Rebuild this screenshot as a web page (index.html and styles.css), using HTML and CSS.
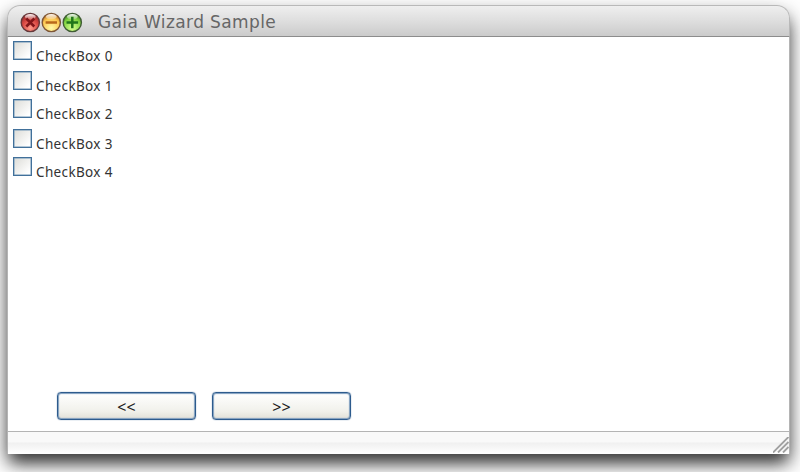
FILE: index.html
```html
<!DOCTYPE html>
<html lang="en">
<head>
<meta charset="utf-8">
<title>Gaia Wizard Sample</title>
<link rel="stylesheet" href="styles.css">
</head>
<body>
<main class="window">
  <header class="titlebar">
    <div class="controls">
      <svg class="orb" viewBox="0 0 21 21">
        <defs>
          <radialGradient id="red" cx=".5" cy=".8" r=".85"><stop offset="0" stop-color="#ff9c8c"/><stop offset=".5" stop-color="#dc4b45"/><stop offset="1" stop-color="#861c20"/></radialGradient>
          <radialGradient id="amber" cx=".5" cy=".8" r=".85"><stop offset="0" stop-color="#fffaa8"/><stop offset=".6" stop-color="#fdc850"/><stop offset="1" stop-color="#a95519"/></radialGradient>
          <radialGradient id="green" cx=".5" cy=".8" r=".85"><stop offset="0" stop-color="#d8ff90"/><stop offset=".6" stop-color="#80d440"/><stop offset="1" stop-color="#286b17"/></radialGradient>
          <linearGradient id="shine" x2="0" y2="1"><stop offset="0" stop-color="#fff" stop-opacity=".95"/><stop offset="1" stop-color="#fff" stop-opacity=".2"/></linearGradient>
        </defs>
        <circle cx="10.3" cy="10.5" r="9.1" fill="url(#red)" stroke="#65383a" stroke-width="1.4"/>
        <ellipse cx="10.3" cy="4.8" rx="5.4" ry="2.7" fill="url(#shine)"/>
        <path d="M6.3 6.5l8 8m0-8l-8 8" stroke="#821519" stroke-width="2.5"/>
      </svg>
      <svg class="orb" viewBox="0 0 21 21">
        <circle cx="10.3" cy="10.5" r="9.1" fill="url(#amber)" stroke="#7d5535" stroke-width="1.4"/>
        <ellipse cx="10.3" cy="4.8" rx="5.4" ry="2.7" fill="url(#shine)"/>
        <path d="M4.6 10.5h11.4" stroke="#b8691b" stroke-width="2.5"/>
      </svg>
      <svg class="orb" viewBox="0 0 21 21">
        <circle cx="10.3" cy="10.5" r="9.1" fill="url(#green)" stroke="#405c35" stroke-width="1.4"/>
        <ellipse cx="10.3" cy="4.8" rx="5.4" ry="2.7" fill="url(#shine)"/>
        <path d="M4.5 10.5h11.6M10.3 4.7v11.6" stroke="#20751a" stroke-width="2.5"/>
      </svg>
    </div>
    <h1 class="title">Gaia Wizard Sample</h1>
  </header>
  <section class="content">
    <div class="options">
      <label class="option"><input type="checkbox" class="box"><span>CheckBox 0</span></label>
      <label class="option"><input type="checkbox" class="box"><span>CheckBox 1</span></label>
      <label class="option"><input type="checkbox" class="box"><span>CheckBox 2</span></label>
      <label class="option"><input type="checkbox" class="box"><span>CheckBox 3</span></label>
      <label class="option"><input type="checkbox" class="box"><span>CheckBox 4</span></label>
    </div>
    <div class="buttons">
      <button class="nav">&lt;&lt;</button>
      <button class="nav">&gt;&gt;</button>
    </div>
  </section>
  <footer class="statusbar">
    <svg class="grip" viewBox="0 0 16 16"><path d="M0 15.5L15.5 0M5 15.5L15.5 5M10 15.5L15.5 10" stroke="#a0a0a0" stroke-width="1.9"/></svg>
  </footer>
</main>
</body>
</html>
```
FILE: styles.css
```css
* { box-sizing: border-box; }
body {
  margin: 0;
  height: 472px;
  padding: 5px 10px 18px 7px;
  overflow: hidden;
  background: #fff;
  font-family: "DejaVu Sans", Verdana, sans-serif;
}
.window {
  display: flex;
  flex-direction: column;
  height: 449px;
  border-radius: 13px 13px 0 0;
  background: #fff;
  box-shadow: 0 9px 20px rgba(0, 0, 0, .5), 0 11px 16px -4px rgba(0, 0, 0, .6);
}
.titlebar {
  display: flex;
  align-items: center;
  height: 32px;
  padding: 2px 0 0 12px;
  border: 1px solid #b9b9b9;
  border-bottom-color: #8c8c8c;
  border-radius: 13px 13px 0 0;
  background: linear-gradient(#efefef, #dedede 50%, #cbcbcb);
}
.controls { display: flex; width: 78px; }
.orb { display: block; width: 21px; height: 21px; }
.title {
  margin: 0;
  color: #666;
  font-size: 17px;
  font-weight: 400;
  letter-spacing: .38px;
  line-height: 22px;
}
.content {
  display: flex;
  flex: 1;
  flex-direction: column;
  justify-content: space-between;
  padding: 4px 5px 11px;
  border: solid #b4b4b4;
  border-width: 0 1px;
}
.option {
  display: flex;
  gap: 4px;
  height: 28px;
  color: #333;
  font-family: "Noto Sans", sans-serif;
  font-size: 13.5px;
  letter-spacing: .36px;
  line-height: 18px;
}
.option:nth-child(odd) { height: 30px; }
.option span { padding-top: 6px; }
.box {
  appearance: none;
  width: 19px;
  height: 19px;
  margin: 0;
  border: 1px solid #41709a;
  background: linear-gradient(135deg, #dcdcd7, #fff 85%);
  box-shadow: inset 0 0 0 .5px #7d9fbd, inset 0 0 1px #41709a;
}
.buttons { display: flex; gap: 16px; padding-left: 44px; }
.nav {
  width: 139px;
  height: 28px;
  padding: 1px 0 0;
  border: 1px solid #2d5b8d;
  border-radius: 4px;
  background: linear-gradient(#fff, #f1f1eb 70%, #e1e0d7);
  box-shadow: 0 0 1px #2d5b8d, inset 0 0 1px 1px #7e9dbd;
  color: #222;
  font: 16px "Noto Sans", sans-serif;
}
.statusbar {
  display: flex;
  align-items: flex-end;
  justify-content: flex-end;
  height: 23px;
  padding: 0 0 1px;
  border: 1px solid #b4b4b4;
  border-bottom: 0;
  background: linear-gradient(#f9f9f9 0 45%, #f0f0f0 50%, #fff);
}
.grip { width: 16px; height: 16px; }
```
